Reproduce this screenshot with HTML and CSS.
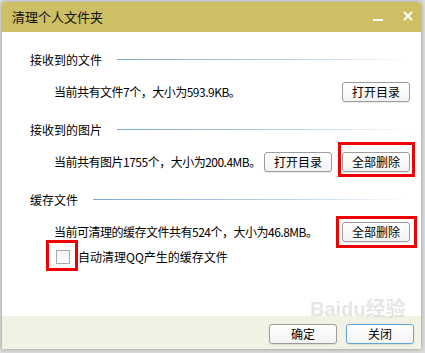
FILE: index.html
```html
<!DOCTYPE html>
<html lang="zh-CN">
<head>
    <meta charset="UTF-8">
    <meta name="viewport" content="width=device-width, initial-scale=1.0">
    <title>清理个人文件夹</title>
    <link rel="stylesheet" href="styles.css">
</head>
<body>

    <div class="window">
        <div class="titlebar">
            <span class="title">清理个人文件夹</span>
            <div class="tb-buttons">
                <span class="tb-min"></span>
                <svg class="tb-close" width="10" height="10" viewBox="0 0 10 10">
                    <path d="M1 1 L9 9 M9 1 L1 9" stroke="#fff" stroke-width="2" fill="none"/>
                </svg>
            </div>
        </div>

        <div class="content">
            <!-- 接收到的文件 -->
            <div class="section">
                <div class="sec-head"><span>接收到的文件</span><i class="rule"></i></div>
                <div class="sec-row">
                    <span class="info">当前共有文件7个，大小为593.9KB。</span>
                    <div class="actions">
                        <button class="btn">打开目录</button>
                    </div>
                </div>
            </div>

            <!-- 接收到的图片 -->
            <div class="section">
                <div class="sec-head"><span>接收到的图片</span><i class="rule"></i></div>
                <div class="sec-row">
                    <span class="info">当前共有图片1755个，大小为200.4MB。</span>
                    <div class="actions">
                        <button class="btn">打开目录</button>
                        <div class="mark-wrap">
                            <button class="btn">全部删除</button>
                            <span class="mark mark-a"></span>
                        </div>
                    </div>
                </div>
            </div>

            <!-- 缓存文件 -->
            <div class="section">
                <div class="sec-head"><span>缓存文件</span><i class="rule"></i></div>
                <div class="sec-row">
                    <span class="info">当前可清理的缓存文件共有524个，大小为46.8MB。</span>
                    <div class="actions">
                        <div class="mark-wrap">
                            <button class="btn">全部删除</button>
                            <span class="mark mark-b"></span>
                        </div>
                    </div>
                </div>
                <label class="check-row">
                    <span class="mark-wrap">
                        <span class="checkbox"></span>
                        <span class="mark mark-c"></span>
                    </span>
                    <span>自动清理QQ产生的缓存文件</span>
                </label>
            </div>
        </div>

        <div class="footer">
            <button class="btn">确定</button>
            <button class="btn btn-focus">关闭</button>
            <div class="watermark">Baidu经验</div>
        </div>
    </div>

</body>
</html>
```

FILE: styles.css
```css
/* Page */
body {
    margin: 0;
    padding: 2px 0 0 2px;
    width: 425px;
    height: 353px;
    box-sizing: border-box;
    overflow: hidden;
    background: #dcdcdc;
    font-family: "Noto Sans CJK SC", "Noto Sans", sans-serif;
    font-size: 12px;
    color: #000;
}

/* Dialog Window */
.window {
    width: 419px;
    height: 347px;
    display: flex;
    flex-direction: column;
    background: #fff;
    border-radius: 3px 3px 0 0;
    box-shadow: 0 0 4px rgba(0, 0, 0, 0.35);
    overflow: hidden;
}

/* Title Bar */
.titlebar {
    height: 30px;
    flex: none;
    display: flex;
    align-items: center;
    justify-content: space-between;
    background: #cdbf65;
    padding: 0 8px 0 10px;
}

.title {
    font-size: 13px;
    line-height: 16px;
    color: #111;
}

.tb-buttons {
    display: flex;
    align-items: center;
    gap: 20px;
}

.tb-min {
    width: 10px;
    height: 2px;
    background: #fff;
    margin-top: 6px;
}

.tb-close {
    display: block;
    margin-top: -3px;
}

/* Content */
.content {
    flex: 1;
    padding: 18px 11px 0 28px;
    display: flex;
    flex-direction: column;
    gap: 18px;
}

.sec-head {
    height: 20px;
    display: flex;
    align-items: center;
    line-height: 16px;
}

.rule {
    flex: 1;
    height: 1px;
    margin: 0 0 2px 15px;
    background: linear-gradient(to right, #79a7d6, rgba(150, 185, 222, 0.6) 65%, rgba(255, 255, 255, 0));
}

.sec-row {
    margin-top: 12px;
    height: 20px;
    display: flex;
    align-items: center;
    justify-content: space-between;
}

.info {
    flex: 1;
    min-width: 0;
    padding-left: 24px;
    line-height: 16px;
    white-space: nowrap;
    letter-spacing: -0.5px;
}

.actions {
    display: flex;
    flex: none;
    gap: 10px;
}

/* Buttons */
.btn {
    width: 68px;
    height: 20px;
    padding: 0;
    font-family: inherit;
    font-size: 12px;
    line-height: 16px;
    color: #000;
    border: 1px solid #9c9c9c;
    border-radius: 3px;
    background: linear-gradient(#ffffff, #f3f3f3);
    box-shadow: 0 1px 1px rgba(0, 0, 0, 0.08);
}

.btn-focus {
    border-color: #5aa6de;
}

/* Checkbox Row */
.check-row {
    margin-top: 8px;
    padding-left: 26px;
    display: flex;
    align-items: center;
    gap: 8px;
    height: 14px;
    line-height: 16px;
}

.checkbox {
    display: block;
    width: 12px;
    height: 12px;
    border: 1px solid #a9a9a9;
    background: linear-gradient(#f4f4f4, #ffffff);
}

/* Red Annotation Boxes */
.mark-wrap {
    position: relative;
    display: block;
}

.mark {
    position: absolute;
    border: 3px solid #f00000;
}

.mark-a {
    top: -10px;
    left: -4px;
    right: -5px;
    bottom: -5px;
}

.mark-b {
    top: -6px;
    left: -6px;
    right: -7px;
    bottom: -6px;
}

.mark-c {
    top: -10px;
    left: -10px;
    right: -8px;
    bottom: -7px;
}

/* Footer */
.footer {
    position: relative;
    height: 33px;
    flex: none;
    background: #f2f2e4;
    display: flex;
    justify-content: flex-end;
    align-items: flex-start;
    gap: 9px;
    padding: 8px 7px 0 0;
    box-sizing: border-box;
}

/* Watermark */
.watermark {
    position: absolute;
    left: 308px;
    top: -18px;
    font-family: "Liberation Sans", "Noto Sans CJK SC", sans-serif;
    font-size: 20px;
    font-weight: bold;
    line-height: 22px;
    color: rgba(200, 200, 200, 0.45);
    pointer-events: none;
}
```
